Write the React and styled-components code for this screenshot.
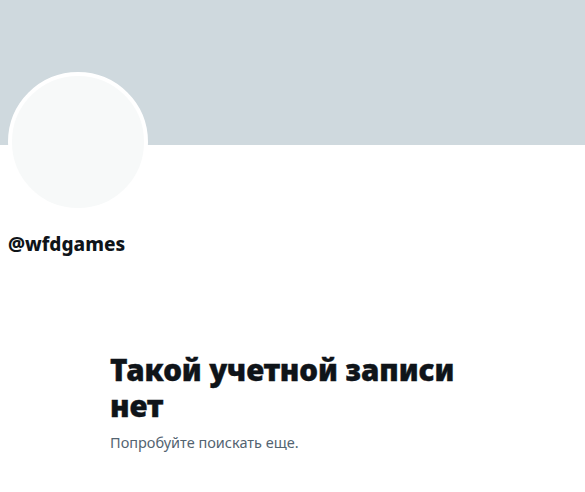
import React from "react"
import styled, { createGlobalStyle } from "styled-components"

const Global = createGlobalStyle`
  body {
    margin: 0;
    background: #fff;
    font-family: "Noto Sans", "Open Sans", sans-serif;
    color: #0f1419;
  }
`

const Banner = styled.div`
  height: 145px;
  background: #cfd9de;
`

const Header = styled.div`
  padding: 0 8px;
`

const Avatar = styled.div`
  width: 132px;
  height: 132px;
  margin-top: -73px;
  border-radius: 50%;
  border: 4px solid #fff;
  background: #f7f9f9;
`

const Handle = styled.div`
  margin-top: 20px;
  font-size: 19px;
  font-weight: 800;
  line-height: 24px;
`

const Empty = styled.div`
  max-width: 365px;
  margin: 96px auto 0;
`

const Title = styled.h1`
  margin: 0;
  font-size: 29.6px;
  font-weight: 900;
  line-height: 36px;
  letter-spacing: -0.1px;
  -webkit-text-stroke: 0.4px #0f1419;
`

const Hint = styled.p`
  margin: 8px 0 0;
  font-size: 14.5px;
  line-height: 20px;
  color: #536471;
`

export default function App() {
  return (
    <>
      <Global />
      <Banner />
      <Header>
        <Avatar />
        <Handle>@wfdgames</Handle>
      </Header>
      <Empty>
        <Title>Такой учетной записи нет</Title>
        <Hint>Попробуйте поискать еще.</Hint>
      </Empty>
    </>
  )
}
